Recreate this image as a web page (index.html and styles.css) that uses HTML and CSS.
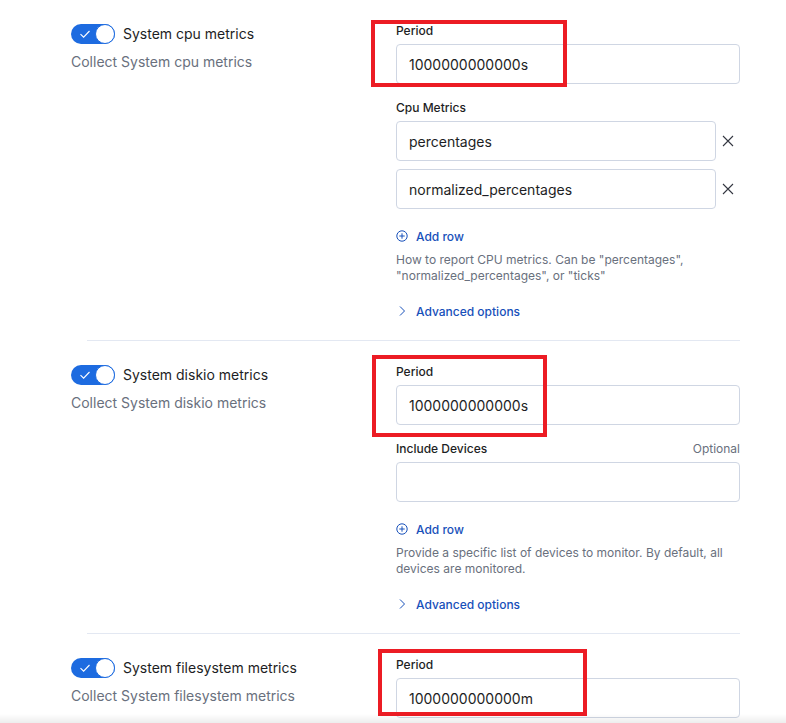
FILE: index.html
```html
<!DOCTYPE html>
<html lang="en">

<head>
    <meta charset="UTF-8">
    <meta name="viewport" content="width=device-width, initial-scale=1.0">
    <title>System metrics</title>
    <link rel="stylesheet" href="styles.css">
</head>

<body>
    <div class="page">

        <!-- cpu -->
        <section class="integration">
            <div class="intro">
                <div class="switch-row">
                    <span class="switch">
                        <svg class="switch-check" width="12" height="12" viewBox="0 0 12 12"><path d="M1.5 6.2 L4.6 9.2 L10.5 3" fill="none" stroke="#fff" stroke-width="1.1"/></svg>
                        <span class="knob"></span>
                    </span>
                    <span class="switch-label">System cpu metrics</span>
                </div>
                <p class="intro-desc">Collect System cpu metrics</p>
            </div>
            <div class="fields">
                <div class="field">
                    <div class="field-label"><span>Period</span></div>
                    <input class="text-input" type="text" value="1000000000000s">
                </div>
                <div class="field">
                    <div class="field-label"><span>Cpu Metrics</span></div>
                    <div class="multi">
                        <div class="multi-row">
                            <input class="text-input" type="text" value="percentages">
                            <span class="remove"><svg width="12" height="12" viewBox="0 0 12 12"><path d="M1 1 L11 11 M11 1 L1 11" stroke="#343741" stroke-width="1.1"/></svg></span>
                        </div>
                        <div class="multi-row">
                            <input class="text-input" type="text" value="normalized_percentages">
                            <span class="remove"><svg width="12" height="12" viewBox="0 0 12 12"><path d="M1 1 L11 11 M11 1 L1 11" stroke="#343741" stroke-width="1.1"/></svg></span>
                        </div>
                    </div>
                    <div class="link add-row">
                        <svg width="12" height="12" viewBox="0 0 12 12"><circle cx="6" cy="6" r="5.2" fill="none" stroke="#1750ba" stroke-width="1"/><path d="M6 3.3 V8.7 M3.3 6 H8.7" stroke="#1750ba" stroke-width="1"/></svg>
                        Add row
                    </div>
                    <p class="help">How to report CPU metrics. Can be "percentages", "normalized_percentages", or "ticks"</p>
                </div>
                <div class="link advanced">
                    <svg width="12" height="12" viewBox="0 0 12 12"><path d="M4 1.5 L8.5 6 L4 10.5" fill="none" stroke="#1750ba" stroke-width="1"/></svg>
                    Advanced options
                </div>
            </div>
        </section>

        <hr class="divider">

        <!-- diskio -->
        <section class="integration">
            <div class="intro">
                <div class="switch-row">
                    <span class="switch">
                        <svg class="switch-check" width="12" height="12" viewBox="0 0 12 12"><path d="M1.5 6.2 L4.6 9.2 L10.5 3" fill="none" stroke="#fff" stroke-width="1.1"/></svg>
                        <span class="knob"></span>
                    </span>
                    <span class="switch-label">System diskio metrics</span>
                </div>
                <p class="intro-desc">Collect System diskio metrics</p>
            </div>
            <div class="fields">
                <div class="field">
                    <div class="field-label"><span>Period</span></div>
                    <input class="text-input" type="text" value="1000000000000s">
                </div>
                <div class="field">
                    <div class="field-label"><span>Include Devices</span><span class="optional">Optional</span></div>
                    <input class="text-input" type="text" value="">
                    <div class="link add-row">
                        <svg width="12" height="12" viewBox="0 0 12 12"><circle cx="6" cy="6" r="5.2" fill="none" stroke="#1750ba" stroke-width="1"/><path d="M6 3.3 V8.7 M3.3 6 H8.7" stroke="#1750ba" stroke-width="1"/></svg>
                        Add row
                    </div>
                    <p class="help">Provide a specific list of devices to monitor. By default, all devices are monitored.</p>
                </div>
                <div class="link advanced">
                    <svg width="12" height="12" viewBox="0 0 12 12"><path d="M4 1.5 L8.5 6 L4 10.5" fill="none" stroke="#1750ba" stroke-width="1"/></svg>
                    Advanced options
                </div>
            </div>
        </section>

        <hr class="divider">

        <!-- filesystem -->
        <section class="integration">
            <div class="intro">
                <div class="switch-row">
                    <span class="switch">
                        <svg class="switch-check" width="12" height="12" viewBox="0 0 12 12"><path d="M1.5 6.2 L4.6 9.2 L10.5 3" fill="none" stroke="#fff" stroke-width="1.1"/></svg>
                        <span class="knob"></span>
                    </span>
                    <span class="switch-label">System filesystem metrics</span>
                </div>
                <p class="intro-desc">Collect System filesystem metrics</p>
            </div>
            <div class="fields">
                <div class="field">
                    <div class="field-label"><span>Period</span></div>
                    <input class="text-input" type="text" value="1000000000000m">
                </div>
            </div>
        </section>

        <!-- red highlight boxes -->
        <div class="mark mark-cpu"></div>
        <div class="mark mark-diskio"></div>
        <div class="mark mark-fs"></div>
    </div>

    <div class="bottom-shade"></div>
</body>

</html>
```

FILE: styles.css
```css
body {
    margin: 0;
    background-color: #fff;
    font-family: Inter, "Liberation Sans", sans-serif;
    color: #1d1e24;
}

.page {
    position: relative;
    padding-left: 71px;
    width: 669px;
}

/* one integration block */
.integration {
    display: grid;
    grid-template-columns: 325px 344px;
    padding: 23px 0 19px 0;
}

.divider {
    margin: 0 0 0 16px;
    width: 653px;
    border: 0;
    border-top: 1px solid #e3e8f2;
}

/* left column */
.intro {
    padding-top: 1px;
}

.switch-row {
    display: flex;
    align-items: center;
    gap: 8px;
    height: 20px;
    font-size: 14px;
}

.switch {
    position: relative;
    display: inline-block;
    width: 44px;
    height: 20px;
    border-radius: 10px;
    background-color: #1d6be0;
}

.switch-check {
    position: absolute;
    left: 8px;
    top: 4px;
}

.knob {
    position: absolute;
    right: 0;
    top: 0;
    width: 20px;
    height: 20px;
    box-sizing: border-box;
    border-radius: 50%;
    border: 1px solid #1d6be0;
    background-color: #fff;
}

.switch-label {
    line-height: 20px;
}

.intro-desc {
    margin: 8px 0 0 0;
    font-size: 14px;
    line-height: 20px;
    color: #69707d;
}

/* right column */
.field + .field {
    margin-top: 16px;
}

.field-label {
    display: flex;
    justify-content: space-between;
    margin-bottom: 5px;
    font-size: 12px;
    line-height: 16px;
    font-weight: 500;
}

.optional {
    font-weight: 400;
    color: #69707d;
}

.text-input {
    display: block;
    width: 100%;
    height: 40px;
    box-sizing: border-box;
    margin: 0;
    padding: 0 12px;
    border: 1px solid #cfd6e3;
    border-radius: 4px;
    font-family: inherit;
    font-size: 14px;
    color: #1d1e24;
    background-color: #fff;
    outline: none;
}

.multi {
    display: flex;
    flex-direction: column;
    gap: 8px;
}

.multi-row {
    display: flex;
    align-items: center;
}

.multi-row .text-input {
    flex: 1;
}

.remove {
    display: flex;
    justify-content: center;
    width: 24px;
}

.link {
    display: flex;
    align-items: center;
    gap: 8px;
    font-size: 12px;
    font-weight: 500;
    color: #1750ba;
}

.add-row {
    margin-top: 15px;
    height: 24px;
}

.help {
    margin: 4px 0 0 0;
    font-size: 12px;
    line-height: 16px;
    color: #69707d;
}

.advanced {
    margin-top: 17px;
    height: 20px;
}

/* annotation boxes */
.mark {
    position: absolute;
    box-sizing: border-box;
    border: 4px solid #ec1c24;
}

.mark-cpu {
    left: 371px;
    top: 20px;
    width: 196px;
    height: 67px;
}

.mark-diskio {
    left: 372px;
    top: 355px;
    width: 175px;
    height: 82px;
}

.mark-fs {
    left: 378px;
    top: 649px;
    width: 209px;
    height: 67px;
}

.bottom-shade {
    position: fixed;
    left: 0;
    right: 0;
    bottom: 0;
    height: 9px;
    background: linear-gradient(to bottom, rgba(0, 0, 0, 0), rgba(0, 0, 0, 0.07));
}
```
